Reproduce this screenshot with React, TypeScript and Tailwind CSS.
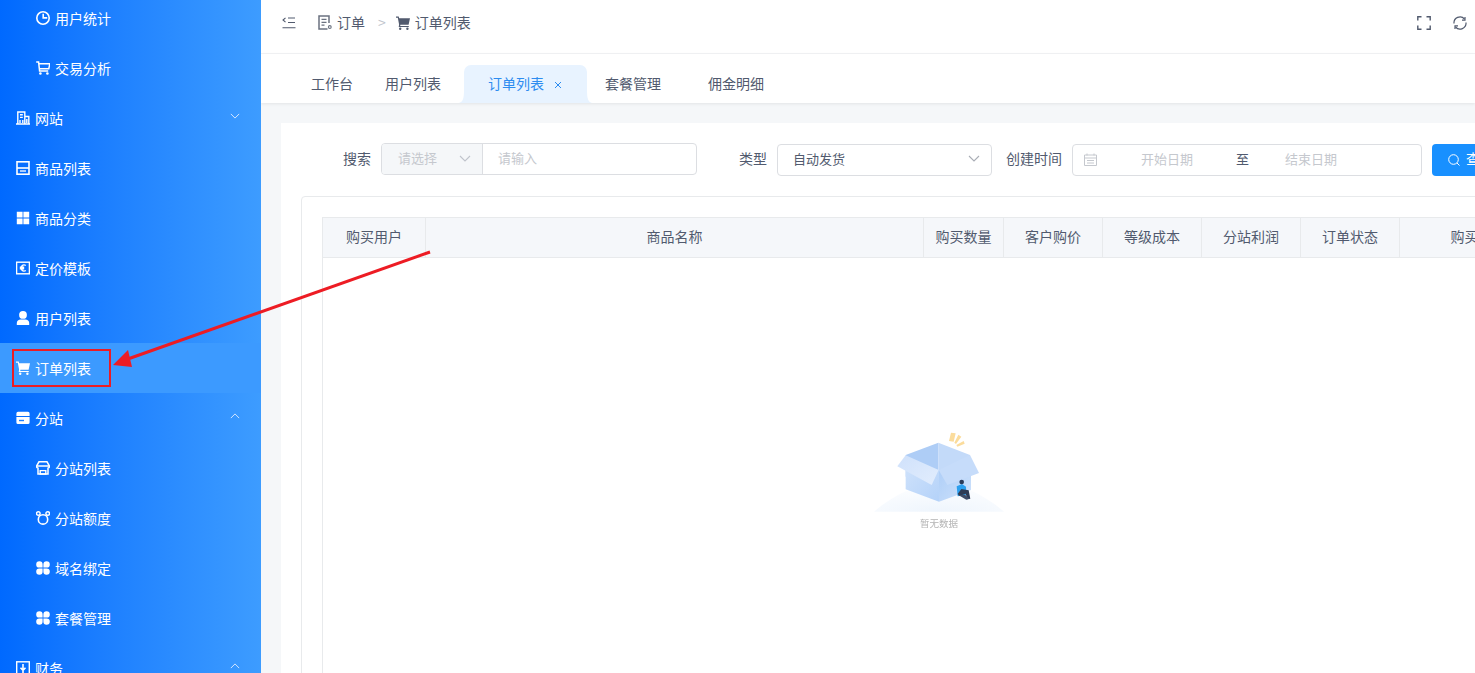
import React from "react";

type IconProps = { className?: string };

const Svg = ({ children, className = "w-[14px] h-[14px] shrink-0 text-white" }: { children: React.ReactNode; className?: string }) => (
  <svg viewBox="0 0 14 14" fill="none" className={className}>{children}</svg>
);

const ChartIcon = (p: IconProps) => (
  <Svg {...p}><circle cx="7" cy="7" r="6.2" stroke="currentColor" strokeWidth="1.6" /><path d="M7.200 2.800V6.900h4" stroke="currentColor" strokeWidth="1.600" /></Svg>
);
const CartOutline = (p: IconProps) => (
  <Svg {...p}><path d="M.2 1h2.400l1 9h8.600M2.800 2.800H13.800l-1 5H3.400" stroke="currentColor" strokeWidth="1.500" /><circle cx="4.400" cy="12.500" r="1.300" fill="currentColor" /><circle cx="11.400" cy="12.500" r="1.300" fill="currentColor" /></Svg>
);
const BuildingIcon = (p: IconProps) => (
  <Svg {...p}><path d="M0 13h14M1.800 13V1h7V13M8.800 5.500H12.800V13" stroke="currentColor" strokeWidth="1.400" /><path d="M4 3.800h2.800M4 6.400h2.800M4 9v3M6.800 9v3M10.800 8v4" stroke="currentColor" strokeWidth="1.400" /></Svg>
);
const ListBoxIcon = (p: IconProps) => (
  <Svg {...p}><rect x="1" y=".8" width="12" height="12.400" stroke="currentColor" strokeWidth="1.600" /><path d="M1 7h12" stroke="currentColor" strokeWidth="1.600" /><path d="M4 10h6" stroke="currentColor" strokeWidth="1.300" /></Svg>
);
const GridIcon = (p: IconProps) => (
  <Svg {...p}><path d="M.8.800h5.800v5.800H.800zM7.400.800h5.800v5.800H7.400zM.800 7.400h5.800v5.800H.800zM7.400 7.400h5.800v5.800H7.400z" fill="currentColor" /></Svg>
);
const EuroIcon = (p: IconProps) => (
  <Svg {...p}><rect x=".6" y="1.200" width="12.800" height="11.600" stroke="currentColor" strokeWidth="1.400" /><path d="M9.800 4.500a3 3 0 1 0 0 5M3.800 6.300h4.400M3.800 7.800h4.400" stroke="currentColor" strokeWidth="1.400" /></Svg>
);
const UserIcon = (p: IconProps) => (
  <Svg {...p}><circle cx="7" cy="3.900" r="3.900" fill="currentColor" /><path d="M.8 14v-2c0-2.200 1.800-3.600 3.800-3.600h4.800c2 0 3.800 1.400 3.800 3.600v2z" fill="currentColor" /></Svg>
);
const CartFilled = (p: IconProps) => (
  <Svg {...p}><path d="M0 .6h2.700l.5 1.600H14l-1.400 6.600H4.400l-.2 1.200h8.600v1.100H2.700l.4-2.600L1.800 1.700H0z" fill="currentColor" /><circle cx="4.200" cy="12.800" r="1.200" fill="currentColor" /><circle cx="11.400" cy="12.800" r="1.200" fill="currentColor" /></Svg>
);
const StoreFilled = (p: IconProps) => (
  <Svg {...p}><path d="M2 .8h10a1.600 1.600 0 0 1 1.600 1.600V5H.4V2.400A1.600 1.600 0 0 1 2 .800zM.4 5.900h13.200v5.500a1.600 1.600 0 0 1-1.600 1.600H2a1.600 1.600 0 0 1-1.600-1.600z" fill="currentColor" /><path d="M3 9.500h5" stroke="#1d80ff" strokeWidth="1.400" /></Svg>
);
const StoreOutline = (p: IconProps) => (
  <Svg {...p}><path d="M3 .8h8l2.500 4.400a2 2 0 0 1-1.500 2v5.900H2V7.200A2 2 0 0 1 .5 5.200z" stroke="currentColor" strokeWidth="1.500" /><path d="M.8 5h12.400M4.200 9.600h5.600v3.400H4.200z" stroke="currentColor" strokeWidth="1.400" /></Svg>
);
const MickeyIcon = (p: IconProps) => (
  <Svg {...p}><circle cx="7" cy="8.400" r="4.700" stroke="currentColor" strokeWidth="1.600" /><circle cx="2.300" cy="2.500" r="1.800" stroke="currentColor" strokeWidth="1.400" /><circle cx="11.700" cy="2.500" r="1.800" stroke="currentColor" strokeWidth="1.400" /></Svg>
);
const CloverIcon = (p: IconProps) => (
  <Svg {...p}><path d="M6.600 6.600H3.400A3.200 3.200 0 1 1 6.600 3.400zM7.400 6.600V3.400a3.200 3.200 0 1 1 3.200 3.200zM6.600 7.400v3.200a3.200 3.200 0 1 1-3.200-3.200zM7.400 7.400h3.200a3.200 3.200 0 1 1-3.200 3.200z" fill="currentColor" /></Svg>
);
const FinanceIcon = (p: IconProps) => (
  <Svg {...p}><rect x=".7" y=".8" width="12.600" height="12.400" stroke="currentColor" strokeWidth="1.400" /><path d="M7 3v6M4.500 6.800 7 9.300l2.500-2.500M7 10v3" stroke="currentColor" strokeWidth="1.600" /></Svg>
);
const Chevron = ({ up, className }: { up?: boolean; className?: string }) => (
  <svg viewBox="0 0 12 7" fill="none" className={className}>
    <path d={up ? "M1 6l5-5 5 5" : "M1 1l5 5 5-5"} stroke="currentColor" strokeWidth="1.100" />
  </svg>
);

type Item = { label: string; icon: (p: IconProps) => React.ReactElement; sub?: boolean; chevron?: "up" | "down"; active?: boolean };
const items: Item[] = [
  { label: "用户统计", icon: ChartIcon, sub: true },
  { label: "交易分析", icon: CartOutline, sub: true },
  { label: "网站", icon: BuildingIcon, chevron: "down" },
  { label: "商品列表", icon: ListBoxIcon },
  { label: "商品分类", icon: GridIcon },
  { label: "定价模板", icon: EuroIcon },
  { label: "用户列表", icon: UserIcon },
  { label: "订单列表", icon: CartFilled, active: true },
  { label: "分站", icon: StoreFilled, chevron: "up" },
  { label: "分站列表", icon: StoreOutline, sub: true },
  { label: "分站额度", icon: MickeyIcon, sub: true },
  { label: "域名绑定", icon: CloverIcon, sub: true },
  { label: "套餐管理", icon: CloverIcon, sub: true },
  { label: "财务", icon: FinanceIcon, chevron: "up" },
];

const Sidebar = () => (
  <aside className="w-[261px] h-full shrink-0 overflow-hidden bg-gradient-to-r from-[#0069ff] to-[#3d9cff]">
    <div className="-mt-[7px]">
      {items.map((it) => (
        <div
          key={it.label + (it.sub ? "s" : "")}
          className={`h-[50px] flex items-center gap-[5px] text-[14px] text-white ${it.sub ? "pl-[36px]" : "pl-[16px]"} pr-[21px] ${it.active ? "bg-[#3c9aff]" : ""}`}
        >
          <it.icon />
          <span>{it.label}</span>
          {it.chevron && (
            <Chevron up={it.chevron === "up"} className="ml-auto w-[10px] h-[6px] -mt-[5px] text-[#e3eeff]" />
          )}
        </div>
      ))}
    </div>
  </aside>
);

const Header = () => (
  <header className="h-[54px] shrink-0 border-b border-[#f2f3f5] flex items-center text-[14px] text-[#515a6e] pl-[21px] pb-[8px]">
    <svg viewBox="0 0 14 12" fill="none" className="w-[14px] h-[12px] shrink-0">
      <path d="M6 1h7M6 5.500h7M.5 10.700h13M3.500.8 1 3l2.500 2.200" stroke="#515a6e" strokeWidth="1.100" />
    </svg>
    <svg viewBox="0 0 14 15" fill="none" className="w-[14px] h-[15px] ml-[22px] shrink-0">
      <path d="M11 8V1H1v13h8.500" stroke="#6b7280" strokeWidth="1.500" />
      <path d="M3.500 4.400h5M3.500 7.300h5M3.500 10.200h3" stroke="#6b7280" strokeWidth="1.200" />
      <circle cx="11.800" cy="12" r="1.400" stroke="#6b7280" strokeWidth="1.100" />
    </svg>
    <span className="ml-[5px]">订单</span>
    <span className="ml-[13px] text-[#c0c4cc]">&gt;</span>
    <CartFilled className="w-[14px] h-[14px] ml-[10px] shrink-0 text-[#515a6e]" />
    <span className="ml-[5px]">订单列表</span>
    <div className="ml-auto flex items-center gap-[22px] pr-[8px]">
      <svg viewBox="0 0 14 14" fill="none" className="w-[14px] h-[14px]">
        <path d="M.8 4.500V.8h3.700M9.500.8h3.700v3.700M13.200 9.500v3.700H9.500M4.500 13.200H.8V9.500" stroke="#515a6e" strokeWidth="1.400" />
      </svg>
      <svg viewBox="0 0 14 14" fill="none" className="w-[14px] h-[14px]">
        <path d="M1 7.500A6 6 0 0 1 11.500 3M13 6.500A6 6 0 0 1 2.500 11" stroke="#515a6e" strokeWidth="1.200" />
        <path d="M12 1v3.200H9M2 13V9.800H5" stroke="#515a6e" strokeWidth="1.200" />
      </svg>
    </div>
  </header>
);

const Tabs = () => (
  <div className="h-[49px] shrink-0 flex items-end text-[14px] text-[#515a6e] shadow-[0_1px_3px_rgba(0,0,0,0.08)] relative z-10 bg-white pl-[50px]">
    <span className="h-[38px] leading-[36px]">工作台</span>
    <span className="h-[38px] leading-[36px] ml-[32px]">用户列表</span>
    <div className="relative h-[38px] w-[123px] ml-[23px] pl-[24px] pb-[2px] rounded-t-[7px] bg-[#e8f3ff] text-[#2d8cf0] flex items-center gap-[10px]">
      <svg viewBox="0 0 6 13" className="absolute -left-[6px] bottom-0 w-[6px] h-[13px]"><path d="M6 0C6 8 5 13 0 13h6z" fill="#e8f3ff" /></svg>
      <svg viewBox="0 0 6 13" className="absolute -right-[6px] bottom-0 w-[6px] h-[13px]"><path d="M0 0C0 8 1 13 6 13H0z" fill="#e8f3ff" /></svg>
      <span>订单列表</span>
      <svg viewBox="0 0 8 8" fill="none" className="w-[8px] h-[8px] mt-[3px]"><path d="M1 1l6 6M7 1 1 7" stroke="#2d8cf0" strokeWidth="1" /></svg>
    </div>
    <span className="h-[38px] leading-[36px] ml-[18px]">套餐管理</span>
    <span className="h-[38px] leading-[36px] ml-[47px]">佣金明细</span>
  </div>
);

const Filters = () => (
  <div className="h-[33px] flex items-center text-[14px] text-[#515a6e] shrink-0 pl-[62px]">
    <span className="w-[28px] shrink-0 pb-[2px]">搜索</span>
    <div className="ml-[10px] w-[316px] h-[32px] -mt-[1px] flex shrink-0 border border-[#dcdee2] rounded-[4px] overflow-hidden text-[13px] text-[#c5c8ce]">
      <div className="w-[101px] flex items-center justify-between pl-[16px] pr-[11px] pb-[2px] bg-[#f5f7f9] border-r border-[#dcdee2]">
        <span>请选择</span>
        <Chevron className="w-[12px] h-[7px] text-[#c0c4cc]" />
      </div>
      <div className="flex-1 flex items-center pl-[15px] pb-[2px]">请输入</div>
    </div>
    <span className="ml-[42px] w-[28px] shrink-0 pb-[2px]">类型</span>
    <div className="ml-[10px] w-[215px] h-[32px] flex items-center justify-between pl-[15px] pr-[11px] pb-[2px] shrink-0 border border-[#dcdee2] rounded-[4px] text-[13px]">
      <span>自动发货</span>
      <Chevron className="w-[12px] h-[7px] text-[#a9adb5]" />
    </div>
    <span className="ml-[14px] w-[56px] shrink-0 pb-[2px]">创建时间</span>
    <div className="ml-[10px] w-[350px] h-[32px] flex items-center shrink-0 border border-[#dcdee2] rounded-[4px] text-[13px] text-[#c5c8ce] pb-[1px]">
      <svg viewBox="0 0 13 13" fill="none" className="w-[13px] h-[13px] ml-[11px] shrink-0">
        <path d="M.5 2h12v10.500H.5zM.5 5h12M3 .5v2M10 .5v2M3 7.500h7M3 10h7" stroke="#c5c8ce" strokeWidth="1" />
      </svg>
      <span className="ml-[44px]">开始日期</span>
      <span className="ml-[43px] text-[#515a6e]">至</span>
      <span className="ml-[36px]">结束日期</span>
    </div>
    <div className="ml-[10px] w-[80px] h-[32px] flex items-center shrink-0 bg-[#1890ff] rounded-[4px] text-white pl-[16px] gap-[6px]">
      <svg viewBox="0 0 12 12" fill="none" className="w-[12px] h-[12px] shrink-0"><circle cx="5.500" cy="5.500" r="4.800" stroke="#fff" strokeWidth="1" /><path d="M9 9l2.500 2.500" stroke="#fff" strokeWidth="1" /></svg>
      <span className="pb-[2px]">查询</span>
    </div>
  </div>
);

const EmptyBox = () => (
  <svg viewBox="0 0 480 285" className="w-[160px] h-[95px] blur-[0.5px]" fill="none">
    <defs>
      <radialGradient id="floor" cx="50%" cy="100%" r="100%" fx="50%" fy="100%">
        <stop offset="0" stopColor="#eef5fd" />
        <stop offset="1" stopColor="#ffffff" />
      </radialGradient>
      <linearGradient id="leftFace" x1="0" y1="0" x2="1" y2="1">
        <stop offset="0" stopColor="#cfe2fb" />
        <stop offset="1" stopColor="#b4d2f9" />
      </linearGradient>
      <linearGradient id="rightFace" x1="0" y1="0" x2="1" y2="1">
        <stop offset="0" stopColor="#aaccf7" />
        <stop offset="1" stopColor="#cfe2fb" />
      </linearGradient>
      <linearGradient id="flapL" x1="0" y1="0" x2="1" y2="1">
        <stop offset="0" stopColor="#cfe1fb" />
        <stop offset="1" stopColor="#e2edfd" />
      </linearGradient>
    </defs>
    <path d="M45 275C110 220 180 190 240 190s130 30 195 85z" fill="url(#floor)" />
    <path d="M270 63 276 38l14 2-6 25zM286 68l12-24 9 6-16 22zM292 75l22-12 3 8-22 9z" fill="#fbdc9c" />
    <path d="M140 105 238 68v82l-98 20z" fill="#aecdf6" />
    <path d="M238 68l95 37v60l-95-15z" fill="#c3daf9" />
    <path d="M140 130v78l100 37V150z" fill="url(#leftFace)" />
    <path d="M240 150l96-30v90l-96 35z" fill="url(#rightFace)" />
    <path d="M140 106 115 139l103 56 21-45z" fill="url(#flapL)" />
    <path d="M333 105l27 54-95 36-26-45z" fill="#c6dcfa" />
    <path d="M293 199l16-7 12 8 1 24-26 5z" fill="#2b9fee" />
    <circle cx="308" cy="186" r="7" fill="#2a3b58" />
    <path d="M307 207l22 4 5 25-9 2-5-17-18 7-6-6z" fill="#2f3c55" />
    <path d="M298 225l20-1 14 12-10 3z" fill="#3f4d68" />
  </svg>
);

const Table = () => {
  const cols: [string, string][] = [
    ["购买用户", "w-[103px]"],
    ["商品名称", "w-[498px]"],
    ["购买数量", "w-[80px]"],
    ["客户购价", "w-[99px]"],
    ["等级成本", "w-[99px]"],
    ["分站利润", "w-[99px]"],
    ["订单状态", "w-[99px]"],
    ["购买时间", "w-[157px]"],
  ];
  return (
    <div className="w-[1234px] shrink-0 border-l border-r border-t border-[#e8eaec] ml-[20px] mt-[20px] flex-1 flex flex-col">
      <div className="h-[40px] shrink-0 flex bg-[#f5f7fa] border-b border-[#e8eaec] text-[14px] text-[#515a6e]">
        {cols.map(([c, w]) => (
          <div key={c} className={`${w} shrink-0 flex items-center justify-center pb-[2px] border-r border-[#e8eaec] last:border-r-0`}>{c}</div>
        ))}
      </div>
      <div className="flex-1 flex flex-col items-center pt-[162px]">
        <EmptyBox />
        <span className="text-[9.500px] leading-[12px] mt-[2px] text-[#b4b4b4] blur-[0.3px]">暂无数据</span>
      </div>
    </div>
  );
};

export default function App() {
  return (
    <div className="relative w-[1475px] h-[673px] overflow-hidden flex bg-white font-['Noto_Sans_CJK_SC','Liberation_Sans',sans-serif]">
      <Sidebar />
      <main className="flex-1 min-w-0 flex flex-col overflow-hidden">
        <Header />
        <Tabs />
        <div className="flex-1 bg-[#f5f7f9] pl-[20px] pt-[20px] flex min-h-0 overflow-hidden">
          <div className="w-[1300px] shrink-0 bg-white pt-[20px] pl-0 flex flex-col">
            <Filters />
            <div className="w-[1290px] ml-[20px] mt-[20px] flex-1 border border-[#e8eaec] rounded-[4px] flex flex-col -mb-[40px]">
              <Table />
            </div>
          </div>
        </div>
      </main>
      <svg viewBox="0 0 1475 673" className="absolute inset-0 w-[1475px] h-[673px] pointer-events-none" fill="none">
        <rect x="13" y="350" width="97" height="36" stroke="#ed1c24" strokeWidth="2" />
        <path d="M430 252 125 360" stroke="#ed1c24" strokeWidth="3" />
        <path d="M113 365 128 350 132 367z" fill="#ed1c24" />
      </svg>
    </div>
  );
}
